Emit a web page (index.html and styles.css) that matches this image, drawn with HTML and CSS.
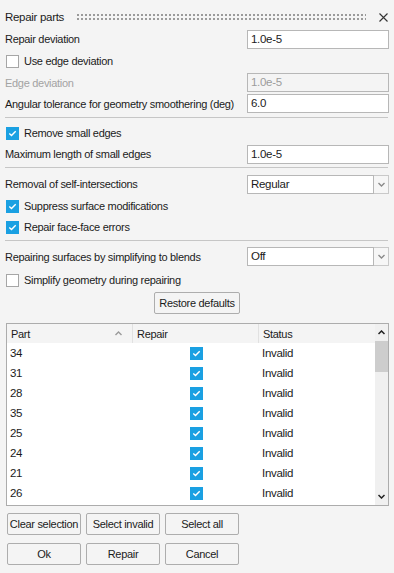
FILE: index.html
```html
<!DOCTYPE html>
<html lang="en">
<head>
    <meta charset="UTF-8">
    <meta name="viewport" content="width=device-width, initial-scale=1.0">
    <title>Repair parts</title>
    <link rel="stylesheet" href="styles.css">
</head>
<body>
<div class="panel">

    <div class="title-bar">
        <span class="title">Repair parts</span>
        <span class="grip"></span>
        <svg class="close" width="9" height="9" viewBox="0 0 9 9">
            <path d="M0.5 0.5 L8.5 8.5 M8.5 0.5 L0.5 8.5" stroke="#333" stroke-width="1.1"/>
        </svg>
    </div>

    <div class="row h22">
        <span>Repair deviation</span>
        <div class="field">1.0e-5</div>
    </div>
    <div class="row h22">
        <label class="check-label"><span class="box"></span>Use edge deviation</label>
    </div>
    <div class="row h21">
        <span class="disabled">Edge deviation</span>
        <div class="field is-disabled">1.0e-5</div>
    </div>
    <div class="row h21">
        <span>Angular tolerance for geometry smoothering (deg)</span>
        <div class="field">6.0</div>
    </div>

    <div class="sep"></div>

    <div class="row h22">
        <label class="check-label"><span class="box checked"></span>Remove small edges</label>
    </div>
    <div class="row h20">
        <span>Maximum length of small edges</span>
        <div class="field">1.0e-5</div>
    </div>

    <div class="sep"></div>

    <div class="row h22">
        <span>Removal of self-intersections</span>
        <div class="select">
            <div class="select-value">Regular</div>
            <div class="select-btn"><svg width="7" height="5" viewBox="0 0 7 5"><path d="M0.5 1 L3.5 4 L6.5 1" fill="none" stroke="#8a8a8a" stroke-width="1.4"/></svg></div>
        </div>
    </div>
    <div class="row h22">
        <label class="check-label"><span class="box checked"></span>Suppress surface modifications</label>
    </div>
    <div class="row h20">
        <label class="check-label"><span class="box checked"></span>Repair face-face errors</label>
    </div>

    <div class="sep"></div>

    <div class="row h21">
        <span>Repairing surfaces by simplifying to blends</span>
        <div class="select">
            <div class="select-value">Off</div>
            <div class="select-btn"><svg width="7" height="5" viewBox="0 0 7 5"><path d="M0.5 1 L3.5 4 L6.5 1" fill="none" stroke="#8a8a8a" stroke-width="1.4"/></svg></div>
        </div>
    </div>
    <div class="row h22 simplify">
        <label class="check-label"><span class="box"></span>Simplify geometry during repairing</label>
    </div>

    <div class="restore-row">
        <button class="btn restore">Restore defaults</button>
    </div>

    <div class="grid">
        <div class="grid-main">
            <div class="grid-head">
                <div class="col-part head-cell">Part
                    <svg class="sort" width="7" height="5" viewBox="0 0 7 5"><path d="M0.5 4 L3.5 1 L6.5 4" fill="none" stroke="#9a9a9a" stroke-width="1.4"/></svg>
                </div>
                <div class="col-repair head-cell">Repair</div>
                <div class="col-status head-cell last">Status</div>
            </div>
            <div class="grid-body" id="grid-body"></div>
        </div>
        <div class="vscroll">
            <div class="sb-arrow"><svg width="7" height="5" viewBox="0 0 7 5"><path d="M0.5 4 L3.5 1 L6.5 4" fill="none" stroke="#222" stroke-width="1.5"/></svg></div>
            <div class="sb-thumb"></div>
            <div class="sb-track"></div>
            <div class="sb-arrow"><svg width="7" height="5" viewBox="0 0 7 5"><path d="M0.5 1 L3.5 4 L6.5 1" fill="none" stroke="#222" stroke-width="1.5"/></svg></div>
        </div>
    </div>

    <div class="btn-row first">
        <button class="btn">Clear selection</button>
        <button class="btn">Select invalid</button>
        <button class="btn">Select all</button>
    </div>
    <div class="btn-row">
        <button class="btn">Ok</button>
        <button class="btn">Repair</button>
        <button class="btn">Cancel</button>
    </div>

</div>

<script>
    // only the rows that fit in the visible part of the list
    const parts = ['34', '31', '28', '35', '25', '24', '21', '26'];
    const body = document.getElementById('grid-body');

    parts.forEach(function(p) {
        const row = document.createElement('div');
        row.className = 'grid-row';
        row.innerHTML =
            '<div class="col-part cell">' + p + '</div>' +
            '<div class="col-repair cell center"><span class="box checked"></span></div>' +
            '<div class="col-status cell">Invalid</div>';
        body.appendChild(row);
    });
</script>
</body>
</html>
```

FILE: styles.css
```css
* {
    box-sizing: border-box;
}

body {
    margin: 0;
    width: 394px;
    height: 573px;
    overflow: hidden;
    background-color: #f4f4f4;
    font-family: 'Liberation Sans', Arial, sans-serif;
    font-size: 11px;
    letter-spacing: -0.3px;
    white-space: nowrap;
    color: #1b1b1b;
}

.panel {
    padding: 0 5px;
}

/* title */
.title-bar {
    display: flex;
    align-items: center;
    height: 28px;
    padding-top: 6px;
}

.title {
    font-size: 11.5px;
}

.grip {
    flex: 1;
    height: 6px;
    margin: 0 13px 0 12px;
    background-image: radial-gradient(circle, #9a9a9a 0.9px, transparent 1px);
    background-size: 4px 4px;
    background-position: 0 -1px;
}

.close {
    margin-right: 1px;
}

/* form rows */
.row {
    display: flex;
    align-items: center;
    justify-content: space-between;
}

.h22 { height: 22px; }
.h21 { height: 21px; }
.h20 { height: 20px; }

.simplify {
    margin-top: 2px;
}

.disabled {
    color: #a3a3a3;
}

.field {
    width: 142px;
    height: 19px;
    border: 1px solid #b7b7b7;
    background-color: #fff;
    padding-left: 3px;
    line-height: 17px;
    font-size: 11.5px;
}

.field.is-disabled {
    background-color: #f4f4f4;
    color: #9c9c9c;
}

.select {
    display: flex;
    width: 142px;
    height: 19px;
}

.select-value {
    flex: 1;
    border: 1px solid #b7b7b7;
    background-color: #fff;
    padding-left: 3px;
    line-height: 17px;
    font-size: 11.5px;
}

.select-btn {
    width: 15px;
    border: 1px solid #c9c9c9;
    border-left: none;
    background-color: #f6f6f6;
    display: flex;
    align-items: center;
    justify-content: center;
}

.check-label {
    display: flex;
    align-items: center;
    padding-left: 1px;
}

.box {
    display: inline-block;
    width: 13px;
    height: 13px;
    border: 1px solid #a6a6a6;
    background-color: #fff;
    margin-right: 5px;
}

.box.checked {
    border-color: #1aa0e2;
    background-color: #1aa0e2;
    background-image: url("data:image/svg+xml,%3Csvg xmlns='http://www.w3.org/2000/svg' width='11' height='11' viewBox='0 0 11 11'%3E%3Cpath d='M2.3 5.6 L4.5 7.6 L8.7 3.3' fill='none' stroke='white' stroke-width='1.4'/%3E%3C/svg%3E");
    background-repeat: no-repeat;
    background-position: center;
}

.sep {
    height: 1px;
    margin: 3px 1px 4px 0;
    background-color: #c6c6c6;
}

.row.h20 + .sep {
    margin-bottom: 5px;
}

/* buttons */
.btn {
    font-family: inherit;
    font-size: 11px;
    letter-spacing: -0.3px;
    white-space: nowrap;
    color: #1b1b1b;
    height: 22px;
    padding: 0;
    background-color: #f4f4f4;
    border: 1px solid #adadad;
    border-radius: 2px;
}

.restore-row {
    display: flex;
    justify-content: center;
    margin-top: 1px;
}

.restore {
    width: 86px;
}

.btn-row {
    display: flex;
    gap: 5px;
    padding-left: 2px;
    margin-top: 8px;
}

.btn-row.first {
    margin-top: 7px;
}

.btn-row .btn {
    width: 74px;
}

/* parts grid */
.grid {
    display: flex;
    margin: 9px 0 0 1px;
    height: 183px;
    border: 1px solid #acacac;
    background-color: #fff;
}

.grid-main {
    flex: 1;
    overflow: hidden;
}

.grid-head {
    display: flex;
    height: 19px;
    background-color: #f4f4f4;
}

.head-cell {
    display: flex;
    align-items: center;
    justify-content: space-between;
    border-right: 1px solid #e1e1e1;
    padding: 0 10px 0 4px;
}

.head-cell.last {
    border-right: none;
}

.col-part { width: 126px; }
.col-repair { width: 126px; }
.col-status { width: 116px; }

.col-repair.head-cell,
.col-status.head-cell {
    padding-left: 4px;
}

.grid-row {
    display: flex;
    height: 20px;
}

.cell {
    display: flex;
    align-items: center;
    padding-left: 3px;
    font-size: 11.5px;
}

.cell.center {
    justify-content: center;
    padding-left: 0;
}

.cell .box {
    margin: 0 0 0 1px;
}

.vscroll {
    width: 13px;
    display: flex;
    flex-direction: column;
    background-color: #f0f0f0;
}

.sb-arrow {
    height: 17px;
    display: flex;
    align-items: center;
    justify-content: center;
}

.sb-thumb {
    height: 31px;
    background-color: #cdcdcd;
}

.sb-track {
    flex: 1;
}
```
